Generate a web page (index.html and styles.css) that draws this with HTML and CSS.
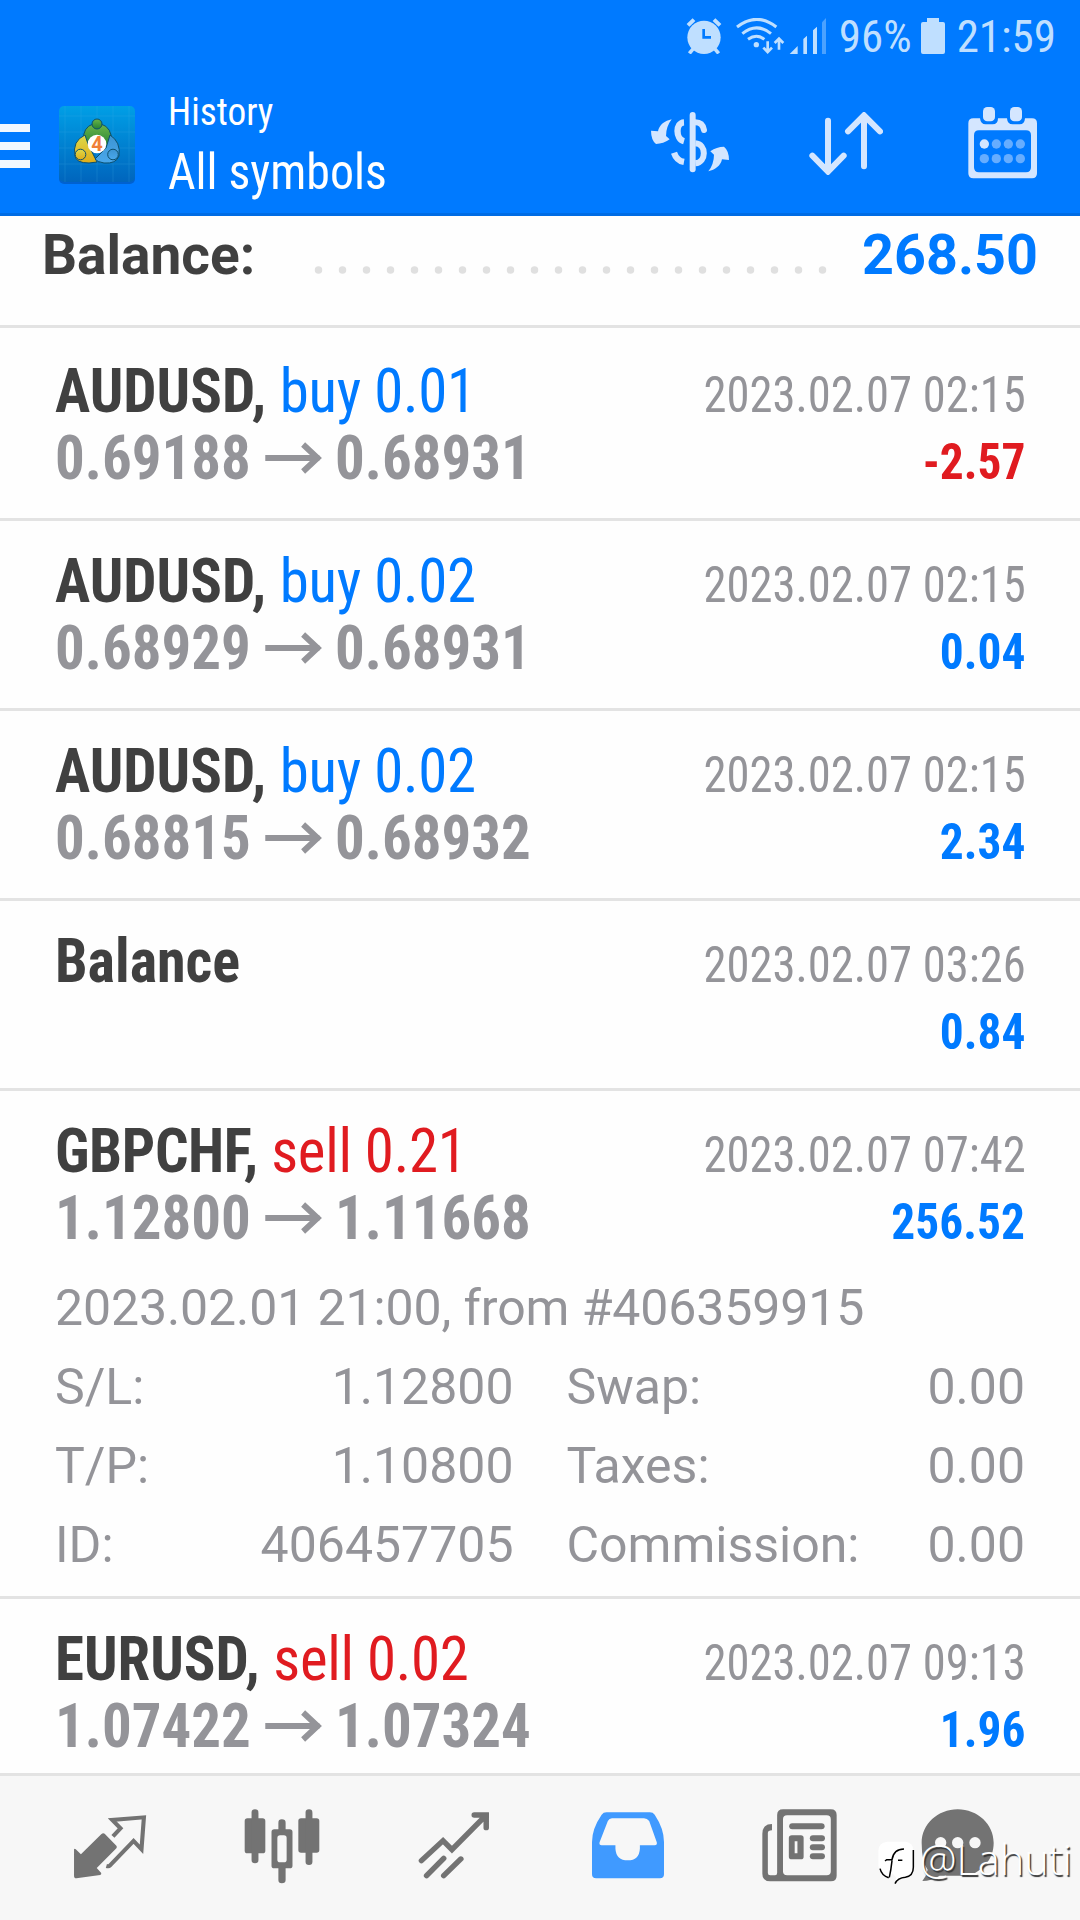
FILE: index.html
```html
<!DOCTYPE html>
<html lang="en">
<head>
<meta charset="utf-8">
<title>History</title>
<link rel="stylesheet" href="styles.css">
</head>
<body>
<header class="header">
  <div class="status">
    <svg class="alarm" viewBox="78 54 108 108" fill="#bfdfff">
      <circle cx="132" cy="112" r="50"/>
      <path d="M84 76L102 59M180 76L162 59" stroke="#bfdfff" stroke-width="12"/>
      <path d="M100 146L88 160M164 146L176 160" stroke="#bfdfff" stroke-width="11"/>
      <path d="M131 87V112H153" fill="none" stroke="#007aff" stroke-width="8"/>
    </svg>
    <svg class="wifi" viewBox="228 54 147 108" fill="none" stroke="#bfdfff" stroke-width="9">
      <path d="M231 81Q290 35 349 81M247 101Q290 66 333 101M264 118Q290 100 313 118"/>
      <circle cx="289" cy="134" r="8" fill="#bfdfff" stroke="none"/>
      <path d="M323 124V155M310 143L323 156L336 143M357 149V118M344 129L357 116L370 129" stroke-width="8"/>
    </svg>
    <svg class="signal" viewBox="387 54 114 108" fill="#bfdfff">
      <path d="M389 162L413 138V162ZM430 162V117L441 107V162ZM459 162V91L471 80V162Z"/>
      <path d="M486 162V67L498 54V162Z" opacity=".4"/>
    </svg>
    <span class="charge">96%</span>
    <svg class="battery" viewBox="0 0 24 36" fill="#bfdfff"><path d="M6 0H18V4H22Q24 4 24 6V34Q24 36 22 36H2Q0 36 0 34V6Q0 4 2 4H6Z"/></svg>
    <span class="clock">21:59</span>
  </div>
  <div class="toolbar">
    <div class="menu"><i></i><i></i><i></i></div>
    <svg class="logo" viewBox="0 0 76 78">
      <defs>
        <linearGradient id="tile" x1="0" y1="0" x2="0" y2="1"><stop offset="0" stop-color="#009fe6"/><stop offset="1" stop-color="#0065bd"/></linearGradient>
        <linearGradient id="green" x1="0" y1="0" x2="0" y2="1"><stop offset="0" stop-color="#6cb54a"/><stop offset="1" stop-color="#238233"/></linearGradient>
        <linearGradient id="gold" x1="0" y1="0" x2="0" y2="1"><stop offset="0" stop-color="#dcd94b"/><stop offset="1" stop-color="#e0ad19"/></linearGradient>
        <linearGradient id="sky" x1="0" y1="0" x2="0" y2="1"><stop offset="0" stop-color="#3c94d2"/><stop offset="1" stop-color="#4aa8ec"/></linearGradient>
      </defs>
      <rect x="0" y="2" width="76" height="76" rx="5" fill="#0050b0" opacity=".6"/>
      <rect width="76" height="76" rx="5" fill="url(#tile)"/>
      <path d="M6 0V76M22 0V76M38 0V76M54 0V76M70 0V76M0 10H76M0 26H76M0 42H76M0 58H76" stroke="#46b3ea" stroke-width=".7" opacity=".3"/>
      <g stroke="#0c4f6d" stroke-width="1">
        <path d="M24 35Q24 21 34 18L42 18Q53 21 53 37L45 41L30 38Z" fill="url(#green)"/>
        <circle cx="38" cy="18" r="5" fill="url(#green)"/>
        <path d="M26 29Q13 35 16 50Q17 57 30 57L38 56L29 38Z" fill="url(#gold)"/>
        <circle cx="21.500" cy="48.500" r="5.300" fill="url(#gold)"/>
        <path d="M51 29Q62 36 60 50Q57 58 45 57Q38 56 36 53L47 42Z" fill="url(#sky)"/>
        <circle cx="54" cy="48.500" r="5.300" fill="url(#sky)"/>
      </g>
      <circle cx="38" cy="38" r="9.300" fill="#fff"/>
      <text x="38" y="45" text-anchor="middle" class="logo-digit">4</text>
    </svg>
    <div class="titles">
      <div class="title">History</div>
      <div class="subtitle">All symbols</div>
    </div>
    <svg class="currency" viewBox="30 60 240 190" fill="#d4e6ff">
      <rect x="149" y="66" width="18" height="181" rx="9"/>
      <path d="M132 97C106 98 106 147 132 154M102 188Q110 212 132 216" fill="none" stroke="#d4e6ff" stroke-width="19"/>
      <path d="M166 97Q188 97 192 120" fill="none" stroke="#d4e6ff" stroke-width="18" stroke-linecap="round"/>
      <path d="M166 160C200 162 200 217 166 220" fill="none" stroke="#d4e6ff" stroke-width="18"/>
      <path d="M95 88C75 92 57 105 54 124L33 122Q33 150 48 162Q70 162 89 148L78 138Q78 110 95 88Z"/>
      <path d="M205 244C225 240 243 227 246 208L267 210Q267 182 252 170Q230 170 211 184L222 194Q222 222 205 244Z"/>
    </svg>
    <svg class="sort" viewBox="447 336 222 190" fill="none" stroke="#d4e6ff" stroke-width="18" stroke-linecap="round">
      <path d="M504 362V512M457 467L504 515L551 467M612 499V350M564 394L612 346L660 394"/>
    </svg>
    <svg class="calendar" viewBox="924 320 210 216" fill="#d4e6ff">
      <path fill-rule="evenodd" d="M940 354H960Q962 372 977 372H998Q1014 372 1014 354H1041Q1042 372 1058 372H1079Q1094 372 1095 354H1116Q1131 354 1131 369V519Q1131 534 1116 534H940Q925 534 925 519V369Q925 354 940 354ZM957 390Q942 390 942 405V501Q942 516 957 516H1098Q1113 516 1113 501V405Q1113 390 1098 390Z"/>
      <rect x="969" y="320" width="36" height="43" rx="13"/><rect x="1050" y="320" width="36" height="43" rx="13"/>
      <circle cx="973" cy="431" r="14"/>
      <g fill="#66adff"><circle cx="1009" cy="431" r="14"/><circle cx="1045" cy="431" r="14"/><circle cx="1081" cy="431" r="14"/><circle cx="973" cy="475" r="14"/><circle cx="1009" cy="475" r="14"/><circle cx="1045" cy="475" r="14"/><circle cx="1081" cy="475" r="14"/></g>
    </svg>
  </div>
</header>

<svg class="defs"><symbol id="arrow" viewBox="0 0 88 40"><path d="M15.500 20H72M55 6.500L70 20L55 33.500" fill="none" stroke="#949499" stroke-width="6.200"/></symbol></svg>

<main class="list">
  <div class="summary"><span>Balance:</span><svg class="dots" viewBox="0 0 528 8"><path d="M12.500 4H520" stroke="#e0e0e0" stroke-width="7.500" stroke-linecap="round" stroke-dasharray="0 24"/></svg><span class="total">268.50</span></div>

  <section class="deal first">
    <div class="line"><div class="name"><b>AUDUSD,</b> <span class="buy">buy 0.01</span></div><div class="date">2023.02.07 02:15</div></div>
    <div class="line"><div class="prices">0.69188<svg><use href="#arrow"/></svg>0.68931</div><div class="profit loss">-2.57</div></div>
  </section>
  <section class="deal">
    <div class="line"><div class="name"><b>AUDUSD,</b> <span class="buy">buy 0.02</span></div><div class="date">2023.02.07 02:15</div></div>
    <div class="line"><div class="prices">0.68929<svg><use href="#arrow"/></svg>0.68931</div><div class="profit">0.04</div></div>
  </section>
  <section class="deal">
    <div class="line"><div class="name"><b>AUDUSD,</b> <span class="buy">buy 0.02</span></div><div class="date">2023.02.07 02:15</div></div>
    <div class="line"><div class="prices">0.68815<svg><use href="#arrow"/></svg>0.68932</div><div class="profit">2.34</div></div>
  </section>
  <section class="deal">
    <div class="line"><div class="name operation"><b>Balance</b></div><div class="date">2023.02.07 03:26</div></div>
    <div class="line end"><div class="profit">0.84</div></div>
  </section>
  <section class="deal open">
    <div class="line"><div class="name tight"><b>GBPCHF,</b> <span class="sell">sell 0.21</span></div><div class="date">2023.02.07 07:42</div></div>
    <div class="line"><div class="prices">1.12800<svg><use href="#arrow"/></svg>1.11668</div><div class="profit">256.52</div></div>
    <div class="details">
      <p class="origin">2023.02.01 21:00, from #406359915</p>
      <p><span>S/L:</span><span>1.12800</span></p><p><span>Swap:</span><span>0.00</span></p>
      <p><span>T/P:</span><span>1.10800</span></p><p><span>Taxes:</span><span>0.00</span></p>
      <p><span>ID:</span><span>406457705</span></p><p><span>Commission:</span><span>0.00</span></p>
    </div>
  </section>
  <section class="deal">
    <div class="line"><div class="name"><b>EURUSD,</b> <span class="sell">sell 0.02</span></div><div class="date">2023.02.07 09:13</div></div>
    <div class="line"><div class="prices">1.07422<svg><use href="#arrow"/></svg>1.07324</div><div class="profit">1.96</div></div>
  </section>
</main>

<nav class="tabs">
  <a><svg width="74" viewBox="212 110 215 235" preserveAspectRatio="none" fill="#737373">
    <path d="M222 324Q215 324 215 316V237Q217 234 220 237L235 252L294 192Q299 187 304 190L338 226Q341 230 338 234L281 293L294 308Q295 312 291 314Z"/>
    <path d="M328 198L350 174L326 149L418 141L411 237L388 212L319 286Q316 289 309 287" fill="none" stroke="#737373" stroke-width="12"/>
  </svg></a>
  <a><svg width="76" viewBox="707 110 221 235" preserveAspectRatio="none" fill="#737373">
    <rect x="709" y="144" width="60" height="105" rx="8"/><rect x="729" y="117" width="20" height="162" rx="10"/>
    <path fill-rule="evenodd" d="M795 177H840Q848 177 848 185V286Q848 294 840 294H795Q787 294 787 286V185Q787 177 795 177ZM812 195Q804 195 804 203V268Q804 276 812 276H823Q831 276 831 268V203Q831 195 823 195Z"/>
    <path d="M807 180V157Q807 147 817 147Q828 147 828 157V180ZM807 290V329Q807 339 817 339Q828 339 828 329V290Z"/>
    <rect x="865" y="144" width="61" height="103" rx="8"/><rect x="886" y="117" width="20" height="167" rx="10"/>
  </svg></a>
  <a><svg width="72" viewBox="1212 110 210 235" preserveAspectRatio="none" fill="none" stroke="#737373" stroke-width="16" stroke-linecap="round">
    <path d="M1222 271L1285 211L1311 238L1410 135M1376 134H1411V172M1237 316L1287 264M1287 316L1337 266"/>
  </svg></a>
  <a class="nudge"><svg width="72" viewBox="148 110 209 235" preserveAspectRatio="none" fill="#409aff">
    <path fill-rule="evenodd" d="M190 126H316Q325 126 330 133Q357 175 357 215V312Q357 324 345 324H160Q148 324 148 312V215Q148 175 176 133Q181 126 190 126ZM206 144Q198 144 194 152L170 216Q168 225 176 225H216V235Q218 270 252 270Q285 270 287 235V225H330Q338 225 336 216L314 152Q308 144 299 144Z"/>
  </svg></a>
  <a class="nudge"><svg width="75" viewBox="648 110 218 235" preserveAspectRatio="none" fill="#737373">
    <path fill-rule="evenodd" d="M709 117H848Q865 117 865 134V316Q865 333 848 333H672Q649 333 649 310V190Q649 161 677 161V180Q665 180 665 188V308Q665 315 672 315H686Q692 315 692 308V134Q692 117 709 117ZM721 135Q709 135 709 147V303Q709 315 721 315H836Q848 315 848 303V147Q848 135 836 135Z"/>
    <rect x="727" y="159" width="103" height="18" rx="9"/>
    <path fill-rule="evenodd" d="M735 195H761Q769 195 769 203V259Q769 267 761 267H735Q726 267 726 259V203Q726 195 735 195ZM743 213V249H751V213Z"/>
    <rect x="787" y="195" width="44" height="18" rx="9"/><rect x="787" y="222" width="44" height="18" rx="9"/><rect x="787" y="249" width="44" height="18" rx="9"/>
  </svg></a>
  <a class="chat"><svg width="74" viewBox="184 50 222 235" preserveAspectRatio="none" fill="#737373">
    <path d="M294 57C354 57 402 102 402 158C402 208 366 245 325 256H240Q215 272 188 272Q200 258 204 238Q186 214 186 158C186 102 234 57 294 57Z"/>
    <g fill="#f7f7f7"><circle cx="243" cy="157" r="17"/><circle cx="294" cy="157" r="17"/><circle cx="346" cy="157" r="17"/></g>
  </svg></a>
</nav>

<div class="watermark">
  <svg viewBox="54 150 116 138">
    <path d="M85 155H140Q163 158 163 182V235Q163 260 142 263Q120 265 109 280L111 262L100 250L92 266Q58 258 58 226V182Q58 158 85 155Z" fill="#fff"/>
    <path d="M78 213L83 209H99Q104 177 135 177M117 211H130M99 212Q96 240 91 262M63 236Q68 257 89 263M163 180V232Q163 258 139 262Q116 264 108 281" fill="none" stroke="#000" stroke-width="4.500"/>
  </svg>
  <span>@Lahuti</span>
</div>
</body>
</html>
```

FILE: styles.css
```css
* { box-sizing: border-box; }

body {
  position: relative;
  display: flex;
  flex-direction: column;
  width: 1080px;
  height: 1920px;
  margin: 0;
  overflow: hidden;
  background: #fefefe;
  color: #949499;
  font-family: Roboto, sans-serif;
}

svg { display: block; flex: none; }
.defs { display: none; }

/* Header */
.header {
  flex: none;
  height: 216px;
  background: #007aff;
  border-bottom: 3px solid #006ce4;
}

.status {
  display: flex;
  justify-content: flex-end;
  height: 72px;
  padding: 18px 24px 0 0;
  color: #bfdfff;
  font: 45px/38px "Roboto Condensed", Roboto, sans-serif;
}
.alarm { width: 36px; height: 36px; margin-right: 14px; }
.wifi { width: 49px; height: 36px; margin-right: 4px; }
.signal { width: 38px; height: 36px; margin-right: 12px; }
.battery { width: 24px; height: 36px; margin: 0 12px 0 9px; }

.toolbar {
  display: flex;
  align-items: flex-start;
  height: 141px;
}
.menu {
  display: grid;
  gap: 10px;
  width: 30px;
  margin: 52px 28.5px 0 0;
}
.menu i { height: 8px; background: #f2f8ff; }
.logo { width: 76px; height: 78px; margin-top: 34px; }
.logo-digit { font: bold 20px Roboto, sans-serif; fill: #f08038; }

.titles {
  flex: 1;
  margin: 15px 0 0 33px;
  color: #fff;
  font-family: "Roboto Condensed", Roboto, sans-serif;
  font-weight: 430;
  transform: scaleX(.957);
  transform-origin: left;
}
.title { font-size: 39px; line-height: 50px; }
.subtitle { font-size: 50px; line-height: 71px; }

.currency { width: 80px; height: 63.300px; margin: 38px 79px 0 0; }
.sort { width: 74px; height: 63.300px; margin: 40px 85px 0 0; }
.calendar { width: 70px; height: 72px; margin: 34.700px 42px 0 0; }

/* Deals */
.list { flex: 1; min-height: 0; overflow: hidden; }

.summary {
  display: flex;
  justify-content: space-between;
  height: 112px;
  padding: 0 42px;
  border-bottom: 3px solid #e3e3e3;
  color: #404040;
  font-size: 55px;
  font-weight: 700;
  line-height: 78px;
}
.dots { width: 528px; height: 8px; margin: 50px -22px 0 0; }
.total { color: #007aff; font-size: 55.700px; }

.deal {
  height: 190px;
  padding: 27px 55px 0;
  border-bottom: 3px solid #e3e3e3;
  font-family: "Roboto Condensed", Roboto, sans-serif;
}
.first { height: 193px; padding-top: 30px; }
.open { height: 508px; }

.line {
  display: flex;
  justify-content: space-between;
  align-items: baseline;
  height: 67px;
  line-height: 67px;
}
.end { justify-content: flex-end; padding-top: 4px; }

.name, .prices {
  font-size: 61.500px;
  white-space: nowrap;
  transform: scaleX(.958);
  transform-origin: left;
}
.name b { color: #404040; }
.tight b { letter-spacing: -.4px; }
.operation { transform: scaleX(.945); }
.prices { display: flex; align-items: center; font-weight: 700; }
.prices svg { width: 88px; height: 40px; margin-top: -2px; }
.buy, .sell { font-weight: 430; letter-spacing: -.3px; }
.buy { color: #007aff; }
.sell { color: #e01b20; }

.date, .profit {
  font-size: 50px;
  transform: scaleX(.932);
  transform-origin: right;
}
.date { margin-right: -1px; font-weight: 420; }
.profit { color: #007aff; font-weight: 700; transform: scaleX(.948); }
.loss { color: #e01b20; }

.details {
  display: grid;
  grid-template-columns: 1fr 1fr;
  column-gap: 53px;
  margin-top: 17px;
  font: 50px/79px Roboto, sans-serif;
}
.details p { display: flex; justify-content: space-between; margin: 0; }
.details .origin { grid-column: 1 / -1; letter-spacing: -.1px; }

/* Bottom tabs */
.tabs {
  display: grid;
  grid-template-columns: repeat(6, 1fr);
  justify-items: center;
  flex: none;
  height: 147px;
  padding: 30.700px 24px 0;
  background: #f7f7f7;
  border-top: 3px solid #e3e3e3;
}
.tabs svg { height: 78.300px; }
.nudge { margin-left: 3px; }
.chat { margin-right: 24px; }

.watermark {
  position: absolute;
  left: 877px;
  top: 1840px;
  display: flex;
  color: #fff;
  font: 300 41.500px/39px "Open Sans", sans-serif;
  text-shadow: 1.500px 1.500px 1px #333;
}
.watermark svg { width: 38.700px; height: 46px; margin-right: 4px; }
```
